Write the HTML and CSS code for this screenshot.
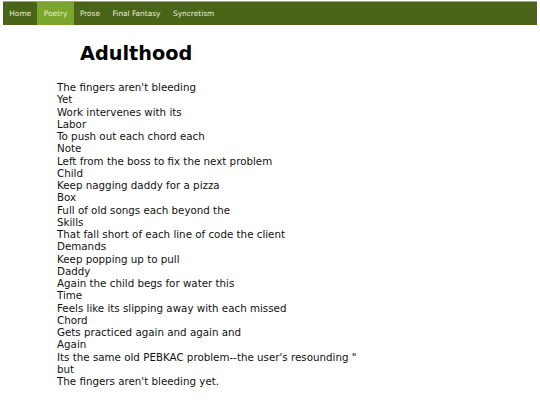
FILE: index.html
```html
<!DOCTYPE html>
<html>
<head>
<meta charset="utf-8">
<link rel="stylesheet" href="styles.css">
</head>
<body>
<nav class="topnav">
  <a href="#">Home</a>
  <a href="#" class="active">Poetry</a>
  <a href="#">Prose</a>
  <a href="#">Final Fantasy</a>
  <a href="#">Syncretism</a>
</nav>
<main class="content">
  <h1 class="title">Adulthood</h1>
  <p class="poem">The fingers aren't bleeding<br>
Yet<br>
Work intervenes with its<br>
Labor<br>
To push out each chord each<br>
Note<br>
Left from the boss to fix the next problem<br>
Child<br>
Keep nagging daddy for a pizza<br>
Box<br>
Full of old songs each beyond the<br>
Skills<br>
That fall short of each line of code the client<br>
Demands<br>
Keep popping up to pull<br>
Daddy<br>
Again the child begs for water this<br>
Time<br>
Feels like its slipping away with each missed<br>
Chord<br>
Gets practiced again and again and<br>
Again<br>
Its the same old PEBKAC problem--the user's resounding "<br>
but<br>
The fingers aren't bleeding yet.</p>
</main>
</body>
</html>
```
FILE: styles.css
```css
html, body {
  margin: 0;
  padding: 0;
  background: #ffffff;
}
body {
  font-family: "DejaVu Sans", Verdana, sans-serif;
  color: #000;
  padding-top: 1px;
}
.topnav {
  display: flex;
  margin: 0 3px;
  height: 23px;
  background: #4a6418;
  border-top: 1px solid #9aa78a;
}
.topnav a {
  display: flex;
  align-items: center;
  padding: 0 6.3px;
  color: #e8efd8;
  text-decoration: none;
  font-size: 7.4px;
}
.topnav a.active {
  background: #7aa62e;
}
.content {
  padding-left: 57px;
}
.title {
  margin: 18px 0 0 23px;
  font-size: 19.3px;
  font-weight: bold;
  line-height: 22px;
}
.poem {
  margin: 16px 0 0 0;
  font-size: 10.3px;
  line-height: 12.25px;
  color: #111;
}
```
